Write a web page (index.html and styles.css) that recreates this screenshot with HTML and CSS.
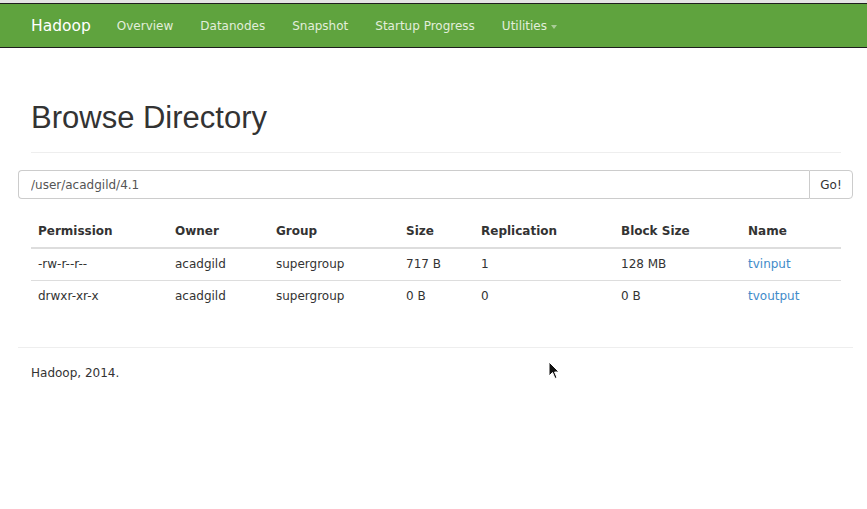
FILE: index.html
```html
<!DOCTYPE html>
<html>
<head>
<meta charset="utf-8">
<link rel="stylesheet" href="styles.css">
<title>Browsing HDFS</title>
</head>
<body>
<div class="topstrip"></div>
<nav class="navbar">
  <span class="brand">Hadoop</span>
  <a class="nav-link">Overview</a>
  <a class="nav-link">Datanodes</a>
  <a class="nav-link">Snapshot</a>
  <a class="nav-link">Startup Progress</a>
  <a class="nav-link">Utilities <span class="caret"></span></a>
</nav>
<div class="container">
  <div class="inner">
    <div class="page-header"><h1>Browse Directory</h1></div>
  </div>
  <div class="input-group">
    <input class="path" type="text" value="/user/acadgild/4.1">
    <button class="go">Go!</button>
  </div>
  <div class="inner">
    <table class="listing">
      <colgroup>
        <col style="width:137px"><col style="width:101px"><col style="width:130px"><col style="width:75px"><col style="width:140px"><col style="width:127px"><col>
      </colgroup>
      <thead>
        <tr><th>Permission</th><th>Owner</th><th>Group</th><th>Size</th><th>Replication</th><th>Block Size</th><th>Name</th></tr>
      </thead>
      <tbody>
        <tr><td>-rw-r--r--</td><td>acadgild</td><td>supergroup</td><td>717 B</td><td>1</td><td>128 MB</td><td><a class="link">tvinput</a></td></tr>
        <tr><td>drwxr-xr-x</td><td>acadgild</td><td>supergroup</td><td>0 B</td><td>0</td><td>0 B</td><td><a class="link">tvoutput</a></td></tr>
      </tbody>
    </table>
  </div>
  <hr class="footer-rule">
  <p class="footer">Hadoop, 2014.</p>
</div>
<svg class="cursor" width="12" height="19" viewBox="0 0 12 19"><path d="M1 1 L1 15 L4.5 11.5 L7 17.5 L9 16.6 L6.6 11 L11 11 Z" fill="#111" stroke="#fff" stroke-width="1"/></svg>
</body>
</html>
```
FILE: styles.css
```css
html, body {
  margin: 0;
  padding: 0;
  background: #fff;
}
body {
  font-family: "DejaVu Sans", sans-serif;
  font-size: 12px;
  color: #333;
  position: relative;
  height: 509px;
  overflow: hidden;
}
.topstrip {
  height: 3px;
  background: #e4e4e4;
}
.navbar {
  height: 43px;
  background: #5fa33e;
  border-top: 1px solid #1e1e1e;
  border-bottom: 1px solid #1e1e1e;
  display: flex;
  align-items: center;
  padding-left: 31px;
  padding-top: 1px;
  box-sizing: content-box;
  gap: 27px;
  max-height: 42px;
}
.brand {
  color: #fff;
  font-size: 15.5px;
  margin-right: -1px;
}
.nav-link {
  color: #e2eedb;
  font-size: 12px;
  display: flex;
  align-items: center;
  gap: 4px;
}
.caret {
  display: inline-block;
  width: 0;
  height: 0;
  border-top: 4px solid #a9cc97;
  border-left: 3px solid transparent;
  border-right: 3px solid transparent;
  margin-top: 2px;
}
.container {
  padding: 0 14px 0 18px;
}
.inner {
  margin: 0 12px 0 13px;
}
.page-header {
  margin-top: 53px;
  padding-bottom: 17px;
  border-bottom: 1px solid #eee;
}
h1 {
  margin: 0;
  font-family: "Liberation Sans", Arial, sans-serif;
  font-weight: 400;
  font-size: 31px;
  line-height: 34px;
  color: #333;
}
.input-group {
  margin-top: 17px;
  display: flex;
  height: 29px;
}
.path {
  flex: 1;
  box-sizing: border-box;
  height: 29px;
  border: 1px solid #ccc;
  border-right: none;
  border-radius: 4px 0 0 4px;
  padding: 0 12px;
  font-family: "DejaVu Sans", sans-serif;
  font-size: 12px;
  color: #555;
  margin: 0;
  outline: none;
}
.go {
  box-sizing: border-box;
  width: 44px;
  height: 29px;
  border: 1px solid #ccc;
  border-radius: 0 4px 4px 0;
  background: #fff;
  font-family: "DejaVu Sans", sans-serif;
  font-size: 12px;
  color: #333;
  margin: 0;
  padding: 0;
}
.listing {
  margin-top: 16px;
  width: 100%;
  border-collapse: collapse;
  table-layout: fixed;
}
.listing th {
  text-align: left;
  font-weight: bold;
  padding: 8px 7px;
  line-height: 16px;
  border-bottom: 2px solid #ddd;
}
.listing td {
  padding: 7px 7px 8px;
  line-height: 16px;
  white-space: nowrap;
}
.listing tbody tr + tr td {
  border-top: 1px solid #ddd;
}
.link {
  color: #428bca;
  text-decoration: none;
}
.footer-rule {
  margin: 35px 0 0;
  border: 0;
  border-top: 1px solid #eee;
}
.footer {
  margin: 17px 0 0 13px;
  line-height: 16px;
}
.cursor {
  position: absolute;
  left: 548px;
  top: 361px;
}
```
